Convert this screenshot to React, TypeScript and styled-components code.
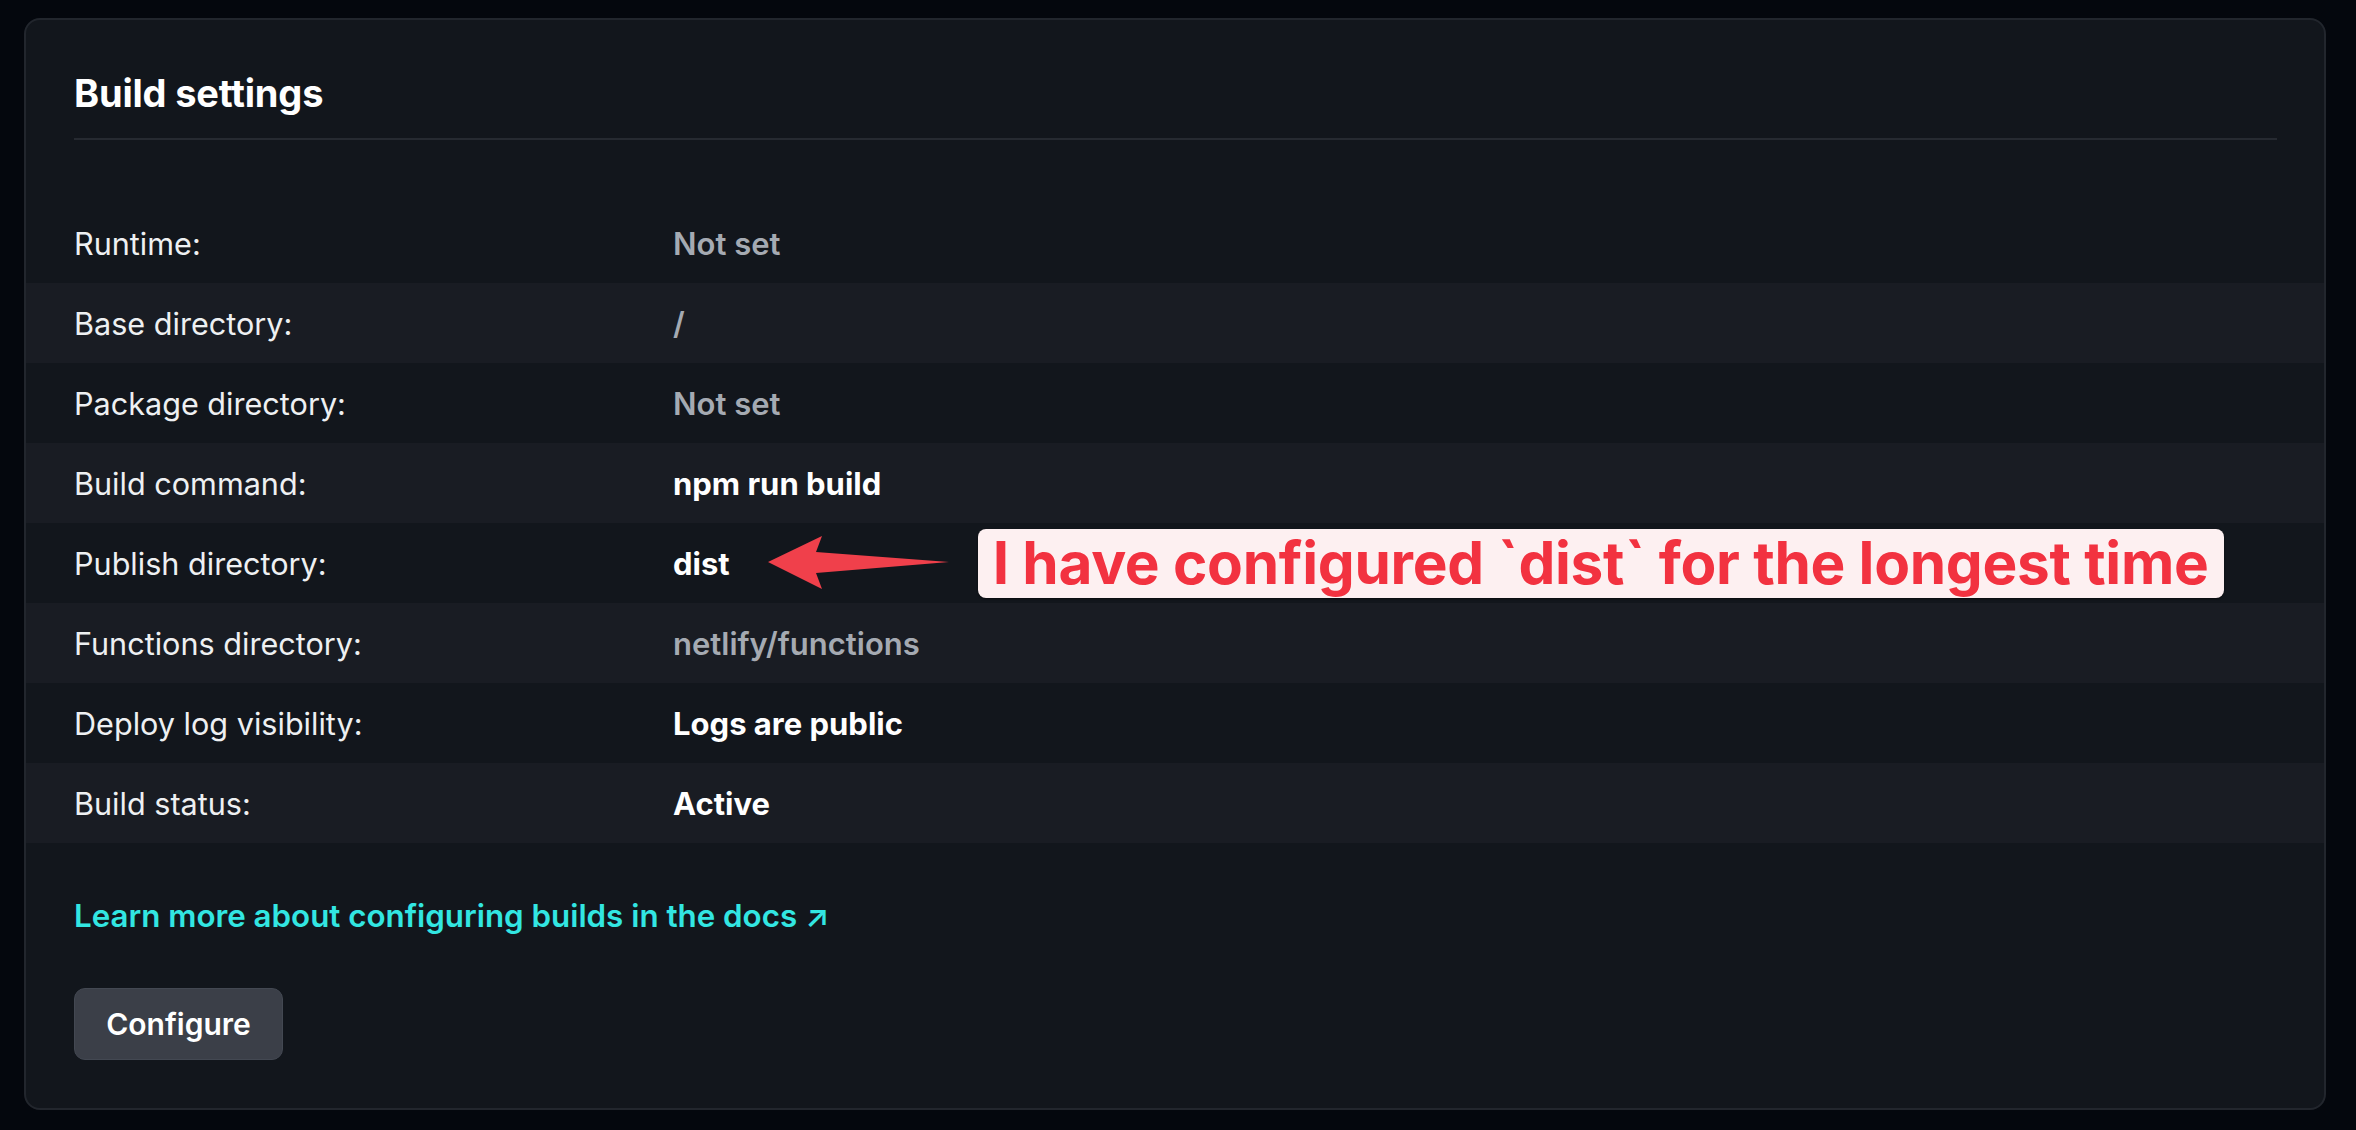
import React from "react";
import styled, {createGlobalStyle} from "styled-components";

const GlobalStyle = createGlobalStyle`
  html, body {
    margin: 0;
    padding: 0;
    background: #04070d;
  }
  body {
    font-family: Inter, "Noto Sans", "Liberation Sans", sans-serif;
    -webkit-font-smoothing: antialiased;
  }
`

const PageDiv = styled.div`
  padding: 18px 30px 20px 24px;
  min-height: 1130px;
  box-sizing: border-box;
`

const CardDiv = styled.section`
  width: 2302px;
  height: 1092px;
  box-sizing: border-box;
  background: #12161c;
  border: 2px solid #22262d;
  border-radius: 16px;
  overflow: hidden;
  display: flex;
  flex-direction: column;
`

const CardHeaderDiv = styled.div`
  margin: 0 47px 0 48px;
  padding: 49px 0 21px 0;
  border-bottom: 2px solid #262a31;
`

const CardTitle = styled.h2`
  margin: 0;
  font-size: 38px;
  line-height: 48px;
  font-weight: 700;
  color: #ffffff;
  letter-spacing: -0.2px;
`

const SettingsListDiv = styled.div`
  margin-top: 63px;
  display: flex;
  flex-direction: column;
`

const SettingRowDiv = styled.div<{ $striped: boolean }>`
  display: grid;
  grid-template-columns: 599px 1fr;
  align-items: center;
  height: 80px;
  padding-left: 48px;
  background: ${({$striped}) => ($striped ? "#191c23" : "transparent")};
`

const SettingLabelSpan = styled.span`
  font-size: 30.6px;
  font-weight: 400;
  color: #eef0f2;
`

const SettingValueDiv = styled.div`
  display: flex;
  align-items: center;
`

const SettingValueSpan = styled.span<{ $muted: boolean }>`
  font-size: 31px;
  font-weight: ${({$muted}) => ($muted ? 600 : 700)};
  color: ${({$muted}) => ($muted ? "#a5aab2" : "#ffffff")};
`

const NoteArrowSvg = styled.svg`
  margin-left: 38px;
  flex: none;
`

const NoteBoxDiv = styled.div`
  margin-left: 28px;
  height: 69px;
  padding: 0 15px;
  display: flex;
  align-items: center;
  background: #fdf0f1;
  border-radius: 8px;
  box-shadow: 0 1px 2px rgba(0, 0, 0, 0.5);
`

const NoteTextSpan = styled.span`
  font-size: 58.5px;
  line-height: 1;
  font-weight: 700;
  color: #f23240;
  letter-spacing: -0.3px;
  white-space: nowrap;
`

const DocsLink = styled.a`
  margin: 53px 0 0 48px;
  font-size: 31.3px;
  line-height: 40px;
  font-weight: 600;
  color: #32e6e2;
  text-decoration: none;
  align-self: flex-start;
`

const ConfigureButton = styled.button`
  margin: 52px 0 0 48px;
  align-self: flex-start;
  width: 209px;
  height: 72px;
  border: 1px solid #434852;
  border-radius: 11px;
  background: #3b3f48;
  color: #ffffff;
  font-family: inherit;
  font-size: 30px;
  font-weight: 600;
  cursor: pointer;
`

type Setting = {
    label: string;
    value: string;
    muted: boolean;
}

const settingList: Setting[] = [
    {label: "Runtime:", value: "Not set", muted: true},
    {label: "Base directory:", value: "/", muted: true},
    {label: "Package directory:", value: "Not set", muted: true},
    {label: "Build command:", value: "npm run build", muted: false},
    {label: "Publish directory:", value: "dist", muted: false},
    {label: "Functions directory:", value: "netlify/functions", muted: true},
    {label: "Deploy log visibility:", value: "Logs are public", muted: false},
    {label: "Build status:", value: "Active", muted: false},
]

const NoteArrow = () => (
    <NoteArrowSvg width="182" height="54" viewBox="0 0 182 54">
        <path
            d="M0 26 L54 0 L48 16 L181 26 L48 37 L54 53 Z"
            fill="#f0404b"
        />
    </NoteArrowSvg>
)

const App = () => {
    return (
        <>
            <GlobalStyle/>
            <PageDiv>
                <CardDiv>
                    <CardHeaderDiv>
                        <CardTitle>Build settings</CardTitle>
                    </CardHeaderDiv>
                    <SettingsListDiv>
                        {
                            settingList.map((setting, index) => (
                                <SettingRowDiv key={setting.label} $striped={index % 2 === 1}>
                                    <SettingLabelSpan>{setting.label}</SettingLabelSpan>
                                    <SettingValueDiv>
                                        <SettingValueSpan $muted={setting.muted}>
                                            {setting.value}
                                        </SettingValueSpan>
                                        {
                                            setting.value === "dist" &&
                                            <>
                                                <NoteArrow/>
                                                <NoteBoxDiv>
                                                    <NoteTextSpan>
                                                        I have configured `dist` for the longest time
                                                    </NoteTextSpan>
                                                </NoteBoxDiv>
                                            </>
                                        }
                                    </SettingValueDiv>
                                </SettingRowDiv>
                            ))
                        }
                    </SettingsListDiv>
                    <DocsLink href="#">
                        Learn more about configuring builds in the docs ↗
                    </DocsLink>
                    <ConfigureButton>Configure</ConfigureButton>
                </CardDiv>
            </PageDiv>
        </>
    )
}

export default App
